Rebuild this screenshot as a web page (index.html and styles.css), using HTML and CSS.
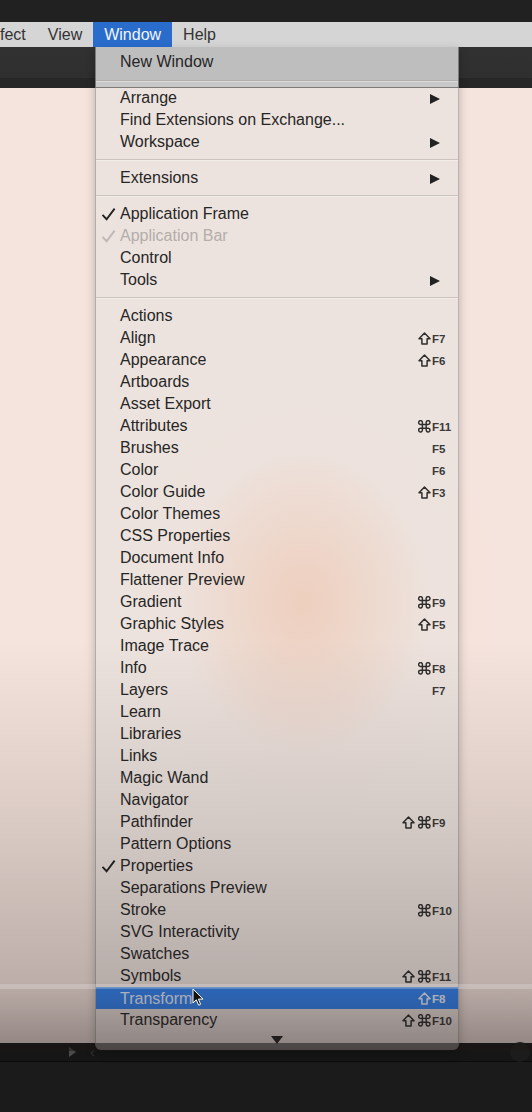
FILE: index.html
```html
<!DOCTYPE html>
<html>
<head>
<meta charset="utf-8">
<link rel="stylesheet" href="styles.css">
</head>
<body>
<svg class="defs" width="0" height="0" aria-hidden="true">
  <symbol id="shift" viewBox="0 0 13 13"><path d="M6.5 1 L12 6.8 L9.1 6.8 L9.1 12 L3.9 12 L3.9 6.8 L1 6.8 Z" fill="none" stroke="currentColor" stroke-width="1.5" stroke-linejoin="round"/></symbol>
  <symbol id="cmd" viewBox="0 0 13 13"><path d="M4.6 4.6 V3 A1.9 1.9 0 1 0 3 4.6 H10 A1.9 1.9 0 1 0 8.4 3 V10 A1.9 1.9 0 1 0 10 8.4 H3 A1.9 1.9 0 1 0 4.6 10 Z" transform="translate(-0.2 -0.2)" fill="none" stroke="currentColor" stroke-width="1.45"/></symbol>
  <symbol id="tick" viewBox="0 0 15 14"><path d="M1.5 7.8 L5.6 12.2 L13.6 1.6" fill="none" stroke="currentColor" stroke-width="1.9"/></symbol>
</svg>
<div class="topbar"></div>
<nav class="menubar">
  <span class="mb-item">fect</span>
  <span class="mb-item">View</span>
  <span class="mb-item active">Window</span>
  <span class="mb-item">Help</span>
</nav>
<main class="workspace">
  <div class="toolstrip"></div>
  <div class="canvas"></div>
  <div class="statusbar">
    <span class="sb-play"></span>
    <span class="sb-back">&lsaquo;</span>
    <span class="sb-dot"></span>
  </div>
  <div class="panel"></div>
</main>

<div class="menu">
  <div class="sect first">
    <div class="row"><span class="chk"></span><span class="lbl">New Window</span></div>
  </div>
  <div class="sep"></div>
  <div class="row"><span class="chk"></span><span class="lbl">Arrange</span><span class="mods"></span><span class="key"><i class="sub"></i></span></div>
  <div class="row"><span class="chk"></span><span class="lbl">Find Extensions on Exchange...</span></div>
  <div class="row"><span class="chk"></span><span class="lbl">Workspace</span><span class="mods"></span><span class="key"><i class="sub"></i></span></div>
  <div class="sep"></div>
  <div class="row"><span class="chk"></span><span class="lbl">Extensions</span><span class="mods"></span><span class="key"><i class="sub"></i></span></div>
  <div class="sep"></div>
  <div class="row"><span class="chk"><svg class="tick"><use href="#tick"/></svg></span><span class="lbl">Application Frame</span></div>
  <div class="row off"><span class="chk"><svg class="tick"><use href="#tick"/></svg></span><span class="lbl">Application Bar</span></div>
  <div class="row"><span class="chk"></span><span class="lbl">Control</span></div>
  <div class="row"><span class="chk"></span><span class="lbl">Tools</span><span class="mods"></span><span class="key"><i class="sub"></i></span></div>
  <div class="sep"></div>
  <div class="row"><span class="chk"></span><span class="lbl">Actions</span></div>
  <div class="row"><span class="chk"></span><span class="lbl">Align</span><span class="mods"><svg class="mk"><use href="#shift"/></svg></span><span class="key">F7</span></div>
  <div class="row"><span class="chk"></span><span class="lbl">Appearance</span><span class="mods"><svg class="mk"><use href="#shift"/></svg></span><span class="key">F6</span></div>
  <div class="row"><span class="chk"></span><span class="lbl">Artboards</span></div>
  <div class="row"><span class="chk"></span><span class="lbl">Asset Export</span></div>
  <div class="row"><span class="chk"></span><span class="lbl">Attributes</span><span class="mods"><svg class="mk"><use href="#cmd"/></svg></span><span class="key">F11</span></div>
  <div class="row"><span class="chk"></span><span class="lbl">Brushes</span><span class="mods"></span><span class="key">F5</span></div>
  <div class="row"><span class="chk"></span><span class="lbl">Color</span><span class="mods"></span><span class="key">F6</span></div>
  <div class="row"><span class="chk"></span><span class="lbl">Color Guide</span><span class="mods"><svg class="mk"><use href="#shift"/></svg></span><span class="key">F3</span></div>
  <div class="row"><span class="chk"></span><span class="lbl">Color Themes</span></div>
  <div class="row"><span class="chk"></span><span class="lbl">CSS Properties</span></div>
  <div class="row"><span class="chk"></span><span class="lbl">Document Info</span></div>
  <div class="row"><span class="chk"></span><span class="lbl">Flattener Preview</span></div>
  <div class="row"><span class="chk"></span><span class="lbl">Gradient</span><span class="mods"><svg class="mk"><use href="#cmd"/></svg></span><span class="key">F9</span></div>
  <div class="row"><span class="chk"></span><span class="lbl">Graphic Styles</span><span class="mods"><svg class="mk"><use href="#shift"/></svg></span><span class="key">F5</span></div>
  <div class="row"><span class="chk"></span><span class="lbl">Image Trace</span></div>
  <div class="row"><span class="chk"></span><span class="lbl">Info</span><span class="mods"><svg class="mk"><use href="#cmd"/></svg></span><span class="key">F8</span></div>
  <div class="row"><span class="chk"></span><span class="lbl">Layers</span><span class="mods"></span><span class="key">F7</span></div>
  <div class="row"><span class="chk"></span><span class="lbl">Learn</span></div>
  <div class="row"><span class="chk"></span><span class="lbl">Libraries</span></div>
  <div class="row"><span class="chk"></span><span class="lbl">Links</span></div>
  <div class="row"><span class="chk"></span><span class="lbl">Magic Wand</span></div>
  <div class="row"><span class="chk"></span><span class="lbl">Navigator</span></div>
  <div class="row"><span class="chk"></span><span class="lbl">Pathfinder</span><span class="mods"><svg class="mk"><use href="#shift"/></svg><svg class="mk"><use href="#cmd"/></svg></span><span class="key">F9</span></div>
  <div class="row"><span class="chk"></span><span class="lbl">Pattern Options</span></div>
  <div class="row"><span class="chk"><svg class="tick"><use href="#tick"/></svg></span><span class="lbl">Properties</span></div>
  <div class="row"><span class="chk"></span><span class="lbl">Separations Preview</span></div>
  <div class="row"><span class="chk"></span><span class="lbl">Stroke</span><span class="mods"><svg class="mk"><use href="#cmd"/></svg></span><span class="key">F10</span></div>
  <div class="row"><span class="chk"></span><span class="lbl">SVG Interactivity</span></div>
  <div class="row"><span class="chk"></span><span class="lbl">Swatches</span></div>
  <div class="row"><span class="chk"></span><span class="lbl">Symbols</span><span class="mods"><svg class="mk"><use href="#shift"/></svg><svg class="mk"><use href="#cmd"/></svg></span><span class="key">F11</span></div>
  <div class="row hot"><span class="chk"></span><span class="lbl">Transform</span><span class="mods"><svg class="mk"><use href="#shift"/></svg></span><span class="key">F8</span></div>
  <div class="row"><span class="chk"></span><span class="lbl">Transparency</span><span class="mods"><svg class="mk"><use href="#shift"/></svg><svg class="mk"><use href="#cmd"/></svg></span><span class="key">F10</span></div>
  <div class="more"><i class="down"></i></div>
</div>

<div class="shade"></div>
<div class="guide"></div>
<svg class="cursor" viewBox="0 0 12 19" width="12" height="19"><path d="M1 1 L1 15 L4.3 11.8 L6.6 17.2 L8.6 16.3 L6.4 11.1 L11 11.1 Z" fill="#111" stroke="#fff" stroke-width="1"/></svg>
</body>
</html>
```

FILE: styles.css
```css
* { box-sizing: border-box; }

html, body {
  margin: 0;
  padding: 0;
}

body {
  width: 532px;
  height: 1112px;
  overflow: hidden;
  background: #1b1b1b;
  font-family: "Liberation Sans", Arial, sans-serif;
  position: relative;
}

.defs {
  position: absolute;
  width: 0;
  height: 0;
}

.topbar {
  height: 22px;
  background: #212121;
}

.menubar {
  height: 25px;
  background: #d5d5d5;
  display: flex;
  align-items: stretch;
  font-size: 16px;
  color: #333;
}

.mb-item {
  display: flex;
  align-items: center;
  padding: 0 11px;
}

.mb-item:first-child {
  padding-left: 0;
}

.mb-item.active {
  background: #2a6ccc;
  color: #f2f6fc;
}

.workspace {
  display: flex;
  flex-direction: column;
}

.toolstrip {
  height: 41px;
  background: linear-gradient(#313131 0, #2f2f2f 31px, #272727 31px);
}

.canvas {
  height: 955px;
  background:
    radial-gradient(ellipse 120px 150px at 303px 515px, rgba(246, 190, 160, 0.9) 0, rgba(246, 200, 176, 0.6) 50%, rgba(246, 210, 195, 0) 100%),
    radial-gradient(ellipse 200px 240px at 303px 515px, rgba(246, 205, 185, 0.7) 0, rgba(245, 220, 208, 0.3) 60%, rgba(245, 227, 220, 0) 100%),
    #f5e4dd;
}

.statusbar {
  height: 19px;
  background: #161616;
  border-bottom: 1px solid #0b0b0b;
  display: flex;
  align-items: center;
}

.sb-play {
  width: 0;
  height: 0;
  margin-left: 69px;
  border-left: 7px solid #4a4a4a;
  border-top: 5px solid transparent;
  border-bottom: 5px solid transparent;
}

.sb-back {
  margin-left: 14px;
  color: #333;
  font-size: 14px;
  line-height: 1;
}

.sb-dot {
  margin-left: auto;
  margin-right: 2px;
  width: 20px;
  height: 20px;
  border-radius: 50%;
  background: #1c1c1c;
}

.panel {
  flex: 1;
  background: #1b1b1b;
}

/* dropdown menu */
.menu {
  position: absolute;
  left: 95px;
  top: 47px;
  width: 364px;
  height: 1003px;
  background: rgba(228, 226, 225, 0.45);
  border-left: 1px solid rgba(120, 120, 120, 0.5);
  border-right: 1px solid rgba(120, 120, 120, 0.45);
  border-radius: 0 0 6px 6px;
  box-shadow: 0 4px 10px rgba(0, 0, 0, 0.25);
  font-size: 16px;
  color: #262626;
  z-index: 2;
}

.sect.first {
  background: #bebebe;
  padding-top: 4px;
  height: 33px;
}

.row {
  height: 22px;
  display: grid;
  grid-template-columns: 24px 1fr 40px 23px;
  align-items: center;
  padding-right: 3px;
  white-space: nowrap;
}

.chk {
  display: flex;
  align-items: center;
  padding-left: 5px;
  color: #222;
}

.tick {
  width: 15px;
  height: 14px;
}

.row.off {
  color: #b3adab;
}

.row.off .chk {
  color: #bdb7b5;
}

.mods {
  display: flex;
  justify-content: flex-end;
  align-items: center;
  gap: 3px;
  padding-right: 1px;
  color: #2e2e2e;
}

.mk {
  width: 13px;
  height: 13px;
}

.key {
  font-size: 11.5px;
  font-weight: bold;
  color: #3a3a3a;
  display: flex;
  align-items: center;
  padding-top: 1px;
}

.sub {
  display: block;
  width: 0;
  height: 0;
  margin-left: -2px;
  border-left: 10px solid #222;
  border-top: 5.5px solid transparent;
  border-bottom: 5.5px solid transparent;
}

.sep {
  height: 14px;
  display: flex;
  flex-direction: column;
  justify-content: center;
}

.sep::before {
  content: "";
  display: block;
  height: 1px;
  background: rgba(140, 135, 133, 0.35);
}

.sep::after {
  content: "";
  display: block;
  height: 1px;
  background: rgba(255, 255, 255, 0.35);
}

.sect.first + .sep {
  height: 7px;
  background: #c8c8c8;
  justify-content: flex-start;
}

.row.hot {
  background: #3284f4;
  border-top: 1px solid #5a9af0;
  color: #e8f0ff;
}

.row.hot .mods,
.row.hot .key {
  color: #eef4ff;
}

.more {
  height: 17px;
  display: flex;
  justify-content: center;
  align-items: center;
}

.down {
  display: block;
  width: 0;
  height: 0;
  border-top: 8px solid #222;
  border-left: 6px solid transparent;
  border-right: 6px solid transparent;
}

/* video vignette toward the bottom */
.shade {
  position: absolute;
  left: 0;
  right: 0;
  top: 640px;
  height: 411px;
  background: linear-gradient(rgba(30, 22, 22, 0) 0, rgba(30, 22, 22, 0.12) 180px, rgba(30, 22, 22, 0.26) 340px, rgba(30, 22, 22, 0.47) 411px);
  pointer-events: none;
  z-index: 3;
}

.guide {
  position: absolute;
  left: 0;
  right: 0;
  top: 984px;
  height: 5px;
  background: rgba(255, 255, 255, 0.22);
  pointer-events: none;
  z-index: 4;
}

.cursor {
  position: absolute;
  left: 192px;
  top: 988px;
  z-index: 5;
}
```
